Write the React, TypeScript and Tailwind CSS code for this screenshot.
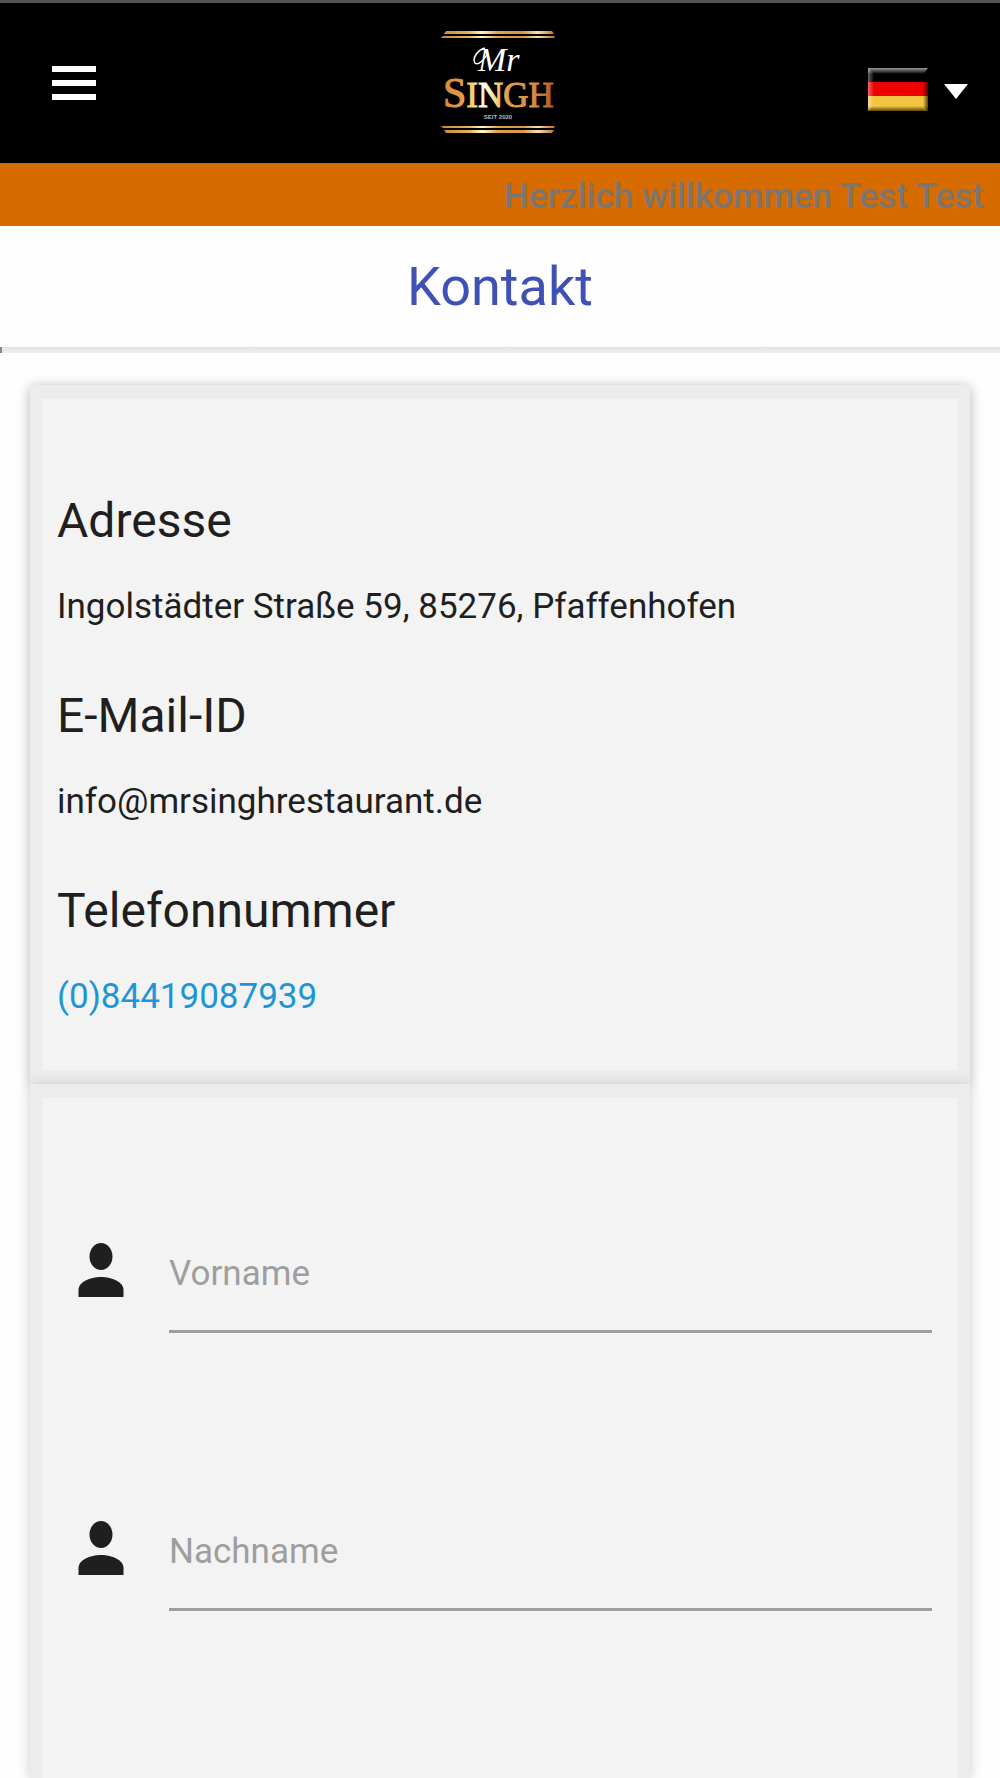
const contactDetails = [
  { title: 'Adresse', value: 'Ingolstädter Straße 59, 85276, Pfaffenhofen' },
  { title: 'E-Mail-ID', value: 'info@mrsinghrestaurant.de' },
  { title: 'Telefonnummer', value: '(0)84419087939', href: 'tel:+4984419087939' },
]

const formFields = [
  { id: 'firstName', label: 'Vorname' },
  { id: 'lastName', label: 'Nachname' },
]

function Logo() {
  return (
    <svg width="120" height="120" viewBox="0 2 120 120" role="img" aria-label="Mr Singh">
      <defs>
        <linearGradient id="gold" x1="0" x2="1" y1="0" y2="0">
          <stop offset="0" stopColor="#d98a3a" />
          <stop offset="0.16" stopColor="#e09a45" />
          <stop offset="0.28" stopColor="#f0dc80" />
          <stop offset="0.38" stopColor="#ffffff" />
          <stop offset="0.47" stopColor="#f3dc85" />
          <stop offset="0.58" stopColor="#e0a04a" />
          <stop offset="0.8" stopColor="#d98f45" />
          <stop offset="1" stopColor="#a85f28" />
        </linearGradient>
        <linearGradient id="bar" x1="0" x2="1" y1="0" y2="0">
          <stop offset="0" stopColor="#c8843a" />
          <stop offset="0.25" stopColor="#e5b45c" />
          <stop offset="0.36" stopColor="#fff6cf" />
          <stop offset="0.5" stopColor="#dfa24a" />
          <stop offset="0.72" stopColor="#d89448" />
          <stop offset="0.85" stopColor="#f7dfb4" />
          <stop offset="1" stopColor="#b86c2c" />
        </linearGradient>
      </defs>
      <path d="M6 10h106l2 3H4z M3 15h111l1 2H1z" fill="url(#bar)" />
      <path d="M1 105h114l-1 2H3z M4 109h110l-2 3H6z" fill="url(#bar)" />
      <path d="M45 27C37 29 32 38 35 42C38 45 44 39 48 32" fill="none" stroke="#fff" strokeWidth="1.5" />
      <text x="38" y="50" fontSize="34" fontStyle="italic" fill="#fff" fontFamily="'Liberation Serif', serif">
        Mr
      </text>
      <text x="3" y="86" fontSize="35" fill="url(#gold)" stroke="url(#gold)" strokeWidth="1" fontFamily="'Liberation Serif', serif">
        <tspan fontSize="42">S</tspan>INGH
      </text>
      <text x="58" y="98" fontSize="6" fontWeight="700" textAnchor="middle" fill="#bbb" fontFamily="'Liberation Sans', sans-serif">
        SEIT 2020
      </text>
    </svg>
  )
}

function GermanFlag() {
  return (
    <svg width="60" height="43" viewBox="0 0 60 43" aria-hidden="true">
      <defs>
        <linearGradient id="flagTop" x1="0" x2="0" y1="0" y2="1">
          <stop offset="0" stopColor="#999" />
          <stop offset="1" stopColor="#000" />
        </linearGradient>
        <linearGradient id="flagBottom" x1="0" x2="0" y1="0" y2="1">
          <stop offset="0" stopColor="#f4c542" />
          <stop offset="1" stopColor="#5c4708" />
        </linearGradient>
        <linearGradient id="flagLeft" x1="0" x2="1" y1="0" y2="0">
          <stop offset="0" stopColor="#fff" stopOpacity="0.4" />
          <stop offset="1" stopColor="#fff" stopOpacity="0" />
        </linearGradient>
        <linearGradient id="flagRight" x1="0" x2="1" y1="0" y2="0">
          <stop offset="0" stopColor="#000" stopOpacity="0" />
          <stop offset="1" stopColor="#000" stopOpacity="0.65" />
        </linearGradient>
      </defs>
      <rect width="60" height="14" fill="#000" />
      <path d="M0 0h60l-4 6H0z" fill="url(#flagTop)" />
      <rect y="14" width="60" height="14" fill="#ee0000" />
      <rect y="28" width="60" height="10" fill="#f4c542" />
      <rect y="38" width="60" height="5" fill="url(#flagBottom)" />
      <path d="M0 0l6 6v32l-6 5z" fill="url(#flagLeft)" />
      <path d="M60 0l-5 6v32l5 5z" fill="url(#flagRight)" />
    </svg>
  )
}

function PersonIcon() {
  return (
    <svg width="46" height="54" viewBox="0 0 46 54" className="shrink-0" fill="#1f1f1f" aria-hidden="true">
      <ellipse cx="23" cy="13.5" rx="11.5" ry="13.5" />
      <path d="M0.5 54V47C0.5 39 12 34 23 34S45.500 39 45.500 47V54z" />
    </svg>
  )
}

export default function App() {
  return (
    <div className="flex min-h-screen flex-col bg-[#fefefe] font-['Roboto',sans-serif] text-[#1f1f1f]">
      <header className="grid h-[163px] grid-cols-3 items-center border-t-[3px] border-[#555] bg-black px-8">
        <button type="button" aria-label="Menü" className="flex w-[44px] flex-col gap-2 justify-self-start ml-5">
          <span className="h-[6px] w-full bg-white" />
          <span className="h-[6px] w-full bg-white" />
          <span className="h-[6px] w-full bg-white" />
        </button>
        <a href="#" className="justify-self-center">
          <Logo />
        </a>
        <button
          type="button"
          aria-label="Sprache: Deutsch"
          aria-haspopup="true"
          className="flex items-center gap-4 justify-self-end pt-3"
        >
          <GermanFlag />
          <svg width="24" height="15" viewBox="0 0 24 15" fill="#fff" className="mt-1" aria-hidden="true">
            <path d="M0 0h24L12 15z" />
          </svg>
        </button>
      </header>

      <p className="bg-[#d66b00] px-4 pt-1 text-right text-[35px] leading-[59px] font-medium text-[#7b7673]">
        Herzlich willkommen Test Test
      </p>

      <h1 className="text-center text-[54px] leading-[121px] text-[#3f51b5]">Kontakt</h1>
      <hr className="h-[6px] border-t-0 border-l-2 border-[#888] bg-linear-to-b from-[#e2e2e2] to-[#f0f0f0]" />

      <main className="mx-[30px] mt-8 flex flex-1 flex-col">
        <section className="border-x-[12px] border-y-[14px] border-[#ececec] bg-[#f3f3f3] px-[15px] pt-[86px] shadow-[0_2px_12px_rgba(0,0,0,0.3)]">
          {contactDetails.map(({ title, value, href }) => (
            <div key={title} className="h-[195px]">
              <h2 className="text-[48px] leading-[72px]">{title}</h2>
              <p className="mt-5 text-[35px] leading-[60px]">
                {href ? (
                  <a href={href} className="text-[#1c96d8]">
                    {value}
                  </a>
                ) : (
                  value
                )}
              </p>
            </div>
          ))}
        </section>

        <form className="flex-1 border-x-[12px] border-t-[14px] border-[#ececec] bg-[#f3f3f3] pt-[123px] pr-[26px] pl-9 shadow-[0_2px_12px_rgba(0,0,0,0.2)]">
          {formFields.map(({ id, label }) => (
            <div key={id} className="flex h-[278px] items-start gap-[45px]">
              <div className="pt-[22px]">
                <PersonIcon />
              </div>
              <input
                id={id}
                name={id}
                type="text"
                placeholder={label}
                aria-label={label}
                className="h-[112px] min-w-0 flex-1 border-b-[3px] border-[#9e9e9e] bg-transparent pb-1 text-[35px] outline-none placeholder:text-[#9e9e9e]"
              />
            </div>
          ))}
        </form>
      </main>
    </div>
  )
}
